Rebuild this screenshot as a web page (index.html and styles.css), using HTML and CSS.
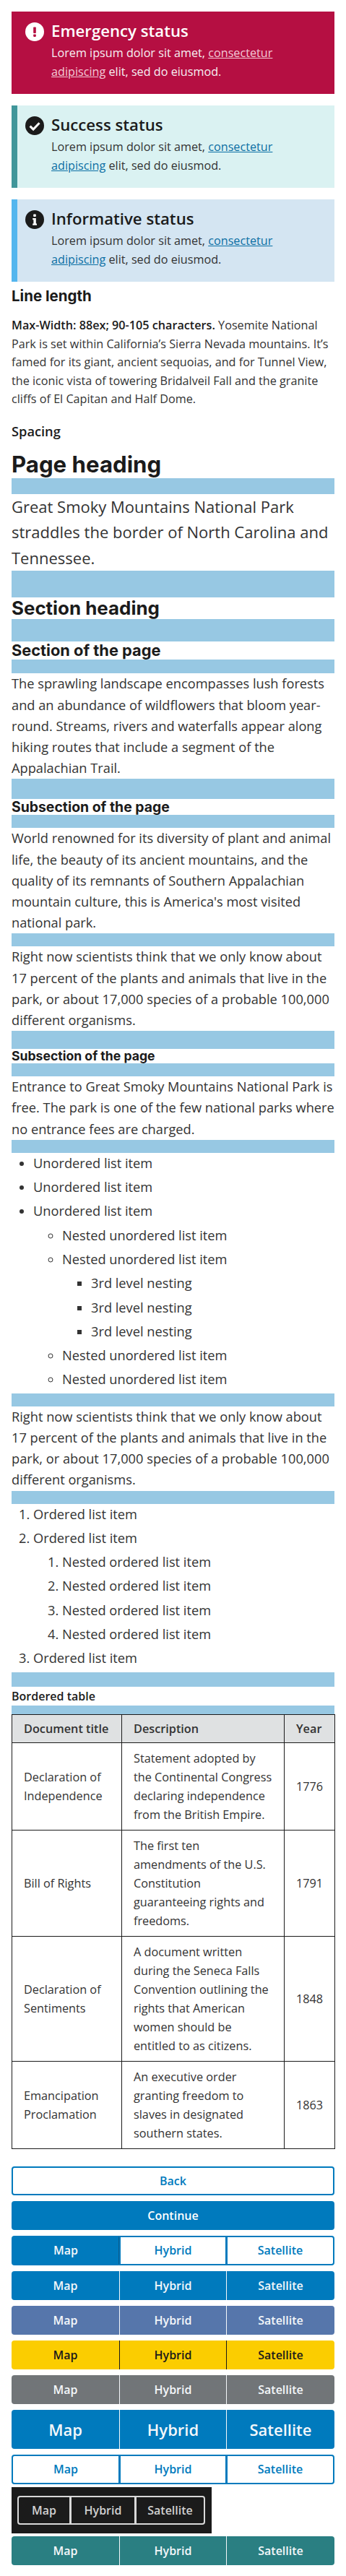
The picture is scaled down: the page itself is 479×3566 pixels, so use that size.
FILE: index.html
```html
<!DOCTYPE html>
<html lang="en">
<head>
  <meta charset="UTF-8" />
  <meta name="viewport" content="width=device-width, initial-scale=1.0" />
  <title>Typography and components</title>
  <link rel="stylesheet" href="styles.css">
</head>
<body>

  <!-- Alerts -->
  <div class="alert alert-emergency">
    <svg class="alert-icon" viewBox="0 0 26 26"><circle cx="13" cy="13" r="13" fill="#fff"/><rect x="11.2" y="6.5" width="3.6" height="8.5" rx="0.8" fill="#b50f42"/><rect x="11.2" y="16.5" width="3.6" height="3.4" rx="0.8" fill="#b50f42"/></svg>
    <div>
      <div class="alert-title">Emergency status</div>
      <div class="alert-text">Lorem ipsum dolor sit amet, <a href="#">consectetur adipiscing</a> elit, sed do eiusmod.</div>
    </div>
  </div>
  <div class="alert alert-success">
    <svg class="alert-icon" viewBox="0 0 26 26"><circle cx="13" cy="13" r="13" fill="#1b1b1b"/><path d="M6.6 13.6l4.5 4.5 8.4-8.8" fill="none" stroke="#fff" stroke-width="3"/></svg>
    <div>
      <div class="alert-title">Success status</div>
      <div class="alert-text">Lorem ipsum dolor sit amet, <a href="#">consectetur adipiscing</a> elit, sed do eiusmod.</div>
    </div>
  </div>
  <div class="alert alert-info">
    <svg class="alert-icon" viewBox="0 0 26 26"><circle cx="13" cy="13" r="13" fill="#1b1b1b"/><rect x="11.2" y="5.6" width="3.6" height="3.4" rx="0.8" fill="#fff"/><path d="M10.2 11h4.6v7.6h1.2v2.2h-5.8v-2.2h1.2v-5.4h-1.2z" fill="#fff"/></svg>
    <div>
      <div class="alert-title">Informative status</div>
      <div class="alert-text">Lorem ipsum dolor sit amet, <a href="#">consectetur adipiscing</a> elit, sed do eiusmod.</div>
    </div>
  </div>

  <!-- Line length -->
  <h3 class="label-heading">Line length</h3>
  <p class="small-text"><strong>Max-Width: 88ex; 90-105 characters.</strong> Yosemite National Park is set within California’s Sierra Nevada mountains. It’s famed for its giant, ancient sequoias, and for Tunnel View, the iconic vista of towering Bridalveil Fall and the granite cliffs of El Capitan and Half Dome.</p>

  <!-- Spacing -->
  <p class="label-text">Spacing</p>
  <h1>Page heading</h1>
  <div class="bar bar-22"></div>
  <p class="lead">Great Smoky Mountains National Park straddles the border of North Carolina and Tennessee.</p>
  <div class="bar bar-37"></div>
  <h2>Section heading</h2>
  <div class="bar bar-31"></div>
  <h3>Section of the page</h3>
  <div class="bar bar-19"></div>
  <p>The sprawling landscape encompasses lush forests and an abundance of wildflowers that bloom year-round. Streams, rivers and waterfalls appear along hiking routes that include a segment of the Appalachian Trail.</p>
  <div class="bar bar-28"></div>
  <h4>Subsection of the page</h4>
  <div class="bar bar-18"></div>
  <p>World renowned for its diversity of plant and animal life, the beauty of its ancient mountains, and the quality of its remnants of Southern Appalachian mountain culture, this is America's most visited national park.</p>
  <div class="bar bar-18"></div>
  <p>Right now scientists think that we only know about 17 percent of the plants and animals that live in the park, or about 17,000 species of a probable 100,000 different organisms.</p>
  <div class="bar bar-25"></div>
  <h5>Subsection of the page</h5>
  <div class="bar bar-18"></div>
  <p>Entrance to Great Smoky Mountains National Park is free. The park is one of the few national parks where no entrance fees are charged.</p>
  <div class="bar bar-18"></div>

  <ul>
    <li>Unordered list item</li>
    <li>Unordered list item</li>
    <li>Unordered list item
      <ul>
        <li>Nested unordered list item</li>
        <li>Nested unordered list item
          <ul>
            <li>3rd level nesting</li>
            <li>3rd level nesting</li>
            <li>3rd level nesting</li>
          </ul>
        </li>
        <li>Nested unordered list item</li>
        <li>Nested unordered list item</li>
      </ul>
    </li>
  </ul>
  <div class="bar bar-18"></div>
  <p>Right now scientists think that we only know about 17 percent of the plants and animals that live in the park, or about 17,000 species of a probable 100,000 different organisms.</p>
  <div class="bar bar-18"></div>
  <ol>
    <li>Ordered list item</li>
    <li>Ordered list item
      <ol>
        <li>Nested ordered list item</li>
        <li>Nested ordered list item</li>
        <li>Nested ordered list item</li>
        <li>Nested ordered list item</li>
      </ol>
    </li>
    <li>Ordered list item</li>
  </ol>
  <div class="bar bar-20"></div>

  <!-- Table -->
  <div class="table-title">Bordered table</div>
  <div class="bar bar-12"></div>
  <table>
    <colgroup>
      <col class="col-title">
      <col class="col-desc">
      <col class="col-year">
    </colgroup>
    <thead>
      <tr><th>Document title</th><th>Description</th><th>Year</th></tr>
    </thead>
    <tbody>
      <tr><td>Declaration of Independence</td><td>Statement adopted by the Continental Congress declaring independence from the British Empire.</td><td>1776</td></tr>
      <tr><td>Bill of Rights</td><td>The first ten amendments of the U.S. Constitution guaranteeing rights and freedoms.</td><td>1791</td></tr>
      <tr><td>Declaration of Sentiments</td><td>A document written during the Seneca Falls Convention outlining the rights that American women should be entitled to as citizens.</td><td>1848</td></tr>
      <tr><td>Emancipation Proclamation</td><td>An executive order granting freedom to slaves in designated southern states.</td><td>1863</td></tr>
    </tbody>
  </table>

  <!-- Buttons -->
  <div class="buttons">
    <button class="btn btn-outline">Back</button>
    <button class="btn btn-solid">Continue</button>

    <div class="group group-outline group-first-on">
      <button>Map</button><button>Hybrid</button><button>Satellite</button>
    </div>
    <div class="group group-blue">
      <button>Map</button><button>Hybrid</button><button>Satellite</button>
    </div>
    <div class="group group-indigo">
      <button>Map</button><button>Hybrid</button><button>Satellite</button>
    </div>
    <div class="group group-gold">
      <button>Map</button><button>Hybrid</button><button>Satellite</button>
    </div>
    <div class="group group-gray">
      <button>Map</button><button>Hybrid</button><button>Satellite</button>
    </div>
    <div class="group group-blue group-big">
      <button>Map</button><button>Hybrid</button><button>Satellite</button>
    </div>
    <div class="group group-outline">
      <button>Map</button><button>Hybrid</button><button>Satellite</button>
    </div>
    <div class="dark-box">
      <div class="group-inverse">
        <button>Map</button><button>Hybrid</button><button>Satellite</button>
      </div>
    </div>
    <div class="group group-teal">
      <button>Map</button><button>Hybrid</button><button>Satellite</button>
    </div>
  </div>

</body>
</html>
```

FILE: styles.css
```css
* {
  box-sizing: border-box;
  margin: 0;
  padding: 0;
}

body {
  font-family: 'Open Sans', sans-serif;
  font-size: 18.24px;
  line-height: 29.2px;
  color: #333;
  background: #fff;
  padding: 16px 16px 20px;
}

h1, h2, h3, h4, h5, .label-heading {
  font-family: Inter, sans-serif;
  font-weight: 700;
  color: #1b1b1b;
}

h1 {
  font-size: 31.2px;
  line-height: 38px;
}

h2 {
  font-size: 25.9px;
  line-height: 30px;
}

h3 {
  font-size: 21.8px;
  line-height: 25px;
}

h4 {
  font-size: 19.4px;
  line-height: 22px;
}

h5 {
  font-size: 17.6px;
  line-height: 20px;
}

.label-heading {
  font-size: 20.5px;
  line-height: 30px;
  margin-top: 5px;
}

.small-text {
  font-size: 16.2px;
  line-height: 25.6px;
  margin-top: 13px;
}

.small-text strong,
.label-text {
  font-weight: 600;
  color: #1b1b1b;
}

.label-text {
  line-height: 25.6px;
  margin-top: 19px;
  margin-bottom: 13px;
}

.lead {
  font-size: 22px;
  line-height: 35.6px;
}

/* Barras de espaco */
.bar {
  background: #97c8e3;
}

.bar-12 { height: 12px; }
.bar-18 { height: 18px; }
.bar-19 { height: 19px; }
.bar-20 { height: 20px; }
.bar-22 { height: 22px; }
.bar-25 { height: 25px; }
.bar-28 { height: 28px; }
.bar-31 { height: 31px; }
.bar-37 { height: 37px; }

/* Alertas */
.alert {
  display: flex;
  gap: 10px;
  height: 114px;
  padding: 12px 16px 0 11px;
  margin-bottom: 16px;
  border-left: 8px solid;
  color: #333;
}

.alert-icon {
  flex: none;
  width: 26px;
  height: 26px;
  margin-top: 3px;
}

.alert-title {
  font-size: 22.2px;
  font-weight: 600;
  line-height: 30px;
  color: #1b1b1b;
}

.alert-text {
  font-size: 16.2px;
  line-height: 25.6px;
  margin-top: 3px;
}

.alert a {
  color: #0b6fa4;
}

.alert-emergency {
  background: #b50f42;
  border-left-color: #b50f42;
  color: #f6f0f2;
}

.alert-emergency .alert-title {
  color: #fff;
}

.alert-emergency a {
  color: #f3c9d6;
}

.alert-success {
  background: #daf2f2;
  border-left-color: #40969a;
}

.alert-info {
  background: #d4e5f2;
  border-left-color: #54b6ee;
  margin-bottom: 0;
}

/* Listas */
ul, ol {
  padding-left: 30px;
}

ul ul, ol ol {
  padding-left: 40px;
  margin-top: 4.1px;
}

li {
  margin-bottom: 4.1px;
}

/* Tabela */
.table-title {
  font-size: 16px;
  font-weight: 600;
  line-height: 26px;
  color: #1b1b1b;
}

table {
  width: 447px;
  table-layout: fixed;
  border-collapse: collapse;
  font-size: 16.25px;
  line-height: 26px;
}

.col-title { width: 152px; }
.col-desc { width: 225px; }
.col-year { width: 70px; }

th, td {
  border: 1px solid #1b1b1b;
  padding: 8px 16px;
  text-align: left;
  vertical-align: middle;
}

th {
  background: #dfe1e2;
  font-weight: 600;
  padding: 6px 16px;
}

/* Botoes */
.buttons {
  display: flex;
  flex-direction: column;
  gap: 8px;
  margin-top: 24px;
}

button {
  font-family: 'Open Sans', sans-serif;
  font-size: 16px;
  font-weight: 600;
  height: 40px;
  cursor: pointer;
}

.btn {
  width: 100%;
  border: 2px solid #007abd;
  border-radius: 4px;
}

.btn-outline {
  background: #fff;
  color: #007abd;
}

.btn-solid {
  background: #007abd;
  color: #fff;
}

.group {
  display: grid;
  grid-template-columns: 149fr 148fr 150fr;
}

.group button {
  border: none;
  color: #f4f7fa;
}

.group button + button {
  border-left: 1px solid;
}

.group button:first-child {
  border-radius: 4px 0 0 4px;
}

.group button:last-child {
  border-radius: 0 4px 4px 0;
}

.group-blue button {
  background: #007abd;
  border-color: #0a5c8c;
}

.group-indigo button {
  background: #5676ab;
  border-color: #2f4f80;
}

.group-gold button {
  background: #fbcd00;
  border-color: #1b1b1b;
  color: #1b1b1b;
}

.group-gray button {
  background: #717578;
  border-color: #54585b;
}

.group-teal button {
  background: #2a7f82;
  border-color: #1a5a5c;
}

.group-big button {
  height: 54px;
  font-size: 22px;
}

.group-outline button,
.group-outline button + button {
  height: 41px;
  background: #fff;
  color: #007abd;
  border: 2px solid #007abd;
  border-right-width: 1px;
}

.group-outline button:last-child {
  border-right-width: 2px;
}

.group-first-on button:first-child {
  background: #007abd;
  color: #f4f7fa;
  border-right-color: #0a5c8c;
}

.dark-box {
  width: 277px;
  height: 64px;
  margin-top: -4px;
  margin-bottom: -4px;
  padding: 12px 8px;
  background: #1b1b1b;
}

.group-inverse {
  display: grid;
  grid-template-columns: 73px 90px 97px;
}

.group-inverse button {
  background: #1b1b1b;
  color: #d0d0d0;
  border: 2px solid #d9d9d9;
  border-right-width: 1px;
}

.group-inverse button:first-child {
  border-radius: 4px 0 0 4px;
}

.group-inverse button:last-child {
  border-right-width: 2px;
  border-radius: 0 4px 4px 0;
}
```
